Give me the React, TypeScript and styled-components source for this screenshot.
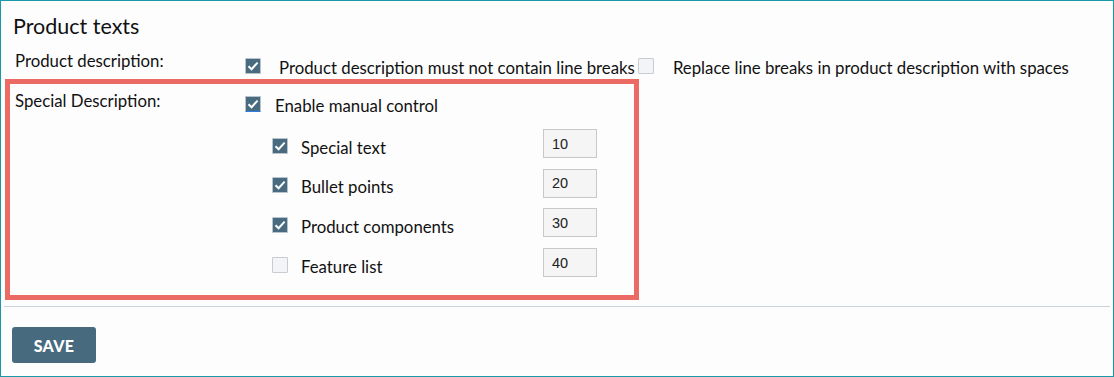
import * as React from 'react';
import styled, { createGlobalStyle } from 'styled-components';

const GlobalStyle = createGlobalStyle`
  html, body {
    margin: 0;
    padding: 0;
    background: #fdfdfe;
  }
  * {
    box-sizing: border-box;
  }
`;

const Frame = styled.div`
  width: 1114px;
  height: 377px;
  border: 1px solid #1a9aa8;
  background: #fdfdfe;
  font-family: Lato, "Noto Sans", sans-serif;
  color: #111;
`;

const Title = styled.h2`
  margin: 0;
  padding: 11px 0 0 12px;
  height: 50px;
  font-size: 21.5px;
  font-weight: 400;
  line-height: 28px;
`;

const Row = styled.div`
  display: grid;
  grid-template-columns: 230px 1fr;
  padding-left: 14px;
`;

const Label = styled.div`
  font-size: 16.8px;
  line-height: 20px;
`;

const Highlight = styled.div`
  margin: 1px 0 0 4px;
  width: 634px;
  height: 221px;
  border: 5px solid #ec6a64;
  padding: 7px 0 0 5px;
  display: grid;
  grid-template-columns: 230px 1fr;
`;

const Options = styled.div`
  display: flex;
  align-items: flex-start;
  padding-top: 5px;
`;

// text sits a touch below the box centre, as in the original form
const Option = styled.label<{ $gap: number }>`
  display: flex;
  align-items: center;
  gap: ${p => p.$gap}px;
  padding-top: 2px;
  font-size: 16.8px;
  line-height: 20px;
  cursor: pointer;
`;

const MasterOption = styled(Option)`
  margin-top: 3px;
`;

const SubOption = styled(Option)`
  padding-top: 8px;
`;

const Box = styled.span<{ $checked: boolean; $focus?: boolean }>`
  display: inline-flex;
  align-items: center;
  justify-content: center;
  width: 16px;
  height: 16px;
  margin-bottom: 4px;
  flex: none;
  background: ${p => (p.$checked ? '#486b80' : '#f3f4f7')};
  border: 1px solid ${p => (p.$checked ? '#b9c3cb' : '#c8cbcf')};
  border-bottom-color: ${p => (p.$focus ? '#2b7de0' : p.$checked ? '#b9c3cb' : '#c8cbcf')};
  border-radius: 1px;
`;

const Controls = styled.div`
  display: flex;
  flex-direction: column;
`;

const SubList = styled.div`
  display: flex;
  flex-direction: column;
  padding: 13px 0 0 27px;
  gap: 10.7px;
`;

const SubRow = styled.div`
  display: grid;
  grid-template-columns: 271px 54px;
  align-items: center;
  height: 29px;
`;

const NumberInput = styled.input`
  width: 54px;
  height: 29px;
  border: 1px solid #c8c8c8;
  background: #f5f5f5;
  padding: 0 0 0 8px;
  font-family: "Liberation Sans", Arial, sans-serif;
  font-size: 14.5px;
  color: #222;
  outline: none;
`;

const Divider = styled.hr`
  margin: 6px 3px 0 3px;
  border: none;
  border-top: 1px solid #c9d3db;
`;

const Footer = styled.div`
  padding: 20px 0 0 11px;
`;

const SaveButton = styled.button`
  width: 84px;
  height: 36px;
  border: none;
  border-radius: 3px;
  background: #476a7f;
  color: #fff;
  font-family: Lato, "Noto Sans", sans-serif;
  font-weight: 900;
  font-size: 16px;
  letter-spacing: 0.3px;
  cursor: pointer;
`;

function Checkbox({ checked, focus }: { checked: boolean; focus?: boolean }) {
  return (
    <Box $checked={checked} $focus={focus}>
      {checked && (
        <svg width="12" height="10" viewBox="0 0 12 10">
          <path d="M1.5 5.2 L4.6 8.2 L10.6 1.6" fill="none" stroke="#fff" strokeWidth="2" />
        </svg>
      )}
    </Box>
  );
}

const items = [
  { label: 'Special text', value: '10', checked: true },
  { label: 'Bullet points', value: '20', checked: true },
  { label: 'Product components', value: '30', checked: true },
  { label: 'Feature list', value: '40', checked: false },
];

export default function App() {
  return (
    <Frame>
      <GlobalStyle />
      <Title>Product texts</Title>
      <Row>
        <Label>Product description:</Label>
        <Options>
          <Option $gap={18}>
            <Checkbox checked />
            <span>Product description must not contain line breaks</span>
          </Option>
          <Option $gap={19} style={{ marginLeft: 3 }}>
            <Checkbox checked={false} />
            <span>Replace line breaks in product description with spaces</span>
          </Option>
        </Options>
      </Row>
      <Highlight>
        <Label>Special Description:</Label>
        <Controls>
          <MasterOption $gap={14}>
            <Checkbox checked focus />
            <span>Enable manual control</span>
          </MasterOption>
          <SubList>
            {items.map(item => (
              <SubRow key={item.label}>
                <SubOption $gap={13}>
                  <Checkbox checked={item.checked} />
                  <span>{item.label}</span>
                </SubOption>
                <NumberInput defaultValue={item.value} />
              </SubRow>
            ))}
          </SubList>
        </Controls>
      </Highlight>
      <Divider />
      <Footer>
        <SaveButton>SAVE</SaveButton>
      </Footer>
    </Frame>
  );
}
